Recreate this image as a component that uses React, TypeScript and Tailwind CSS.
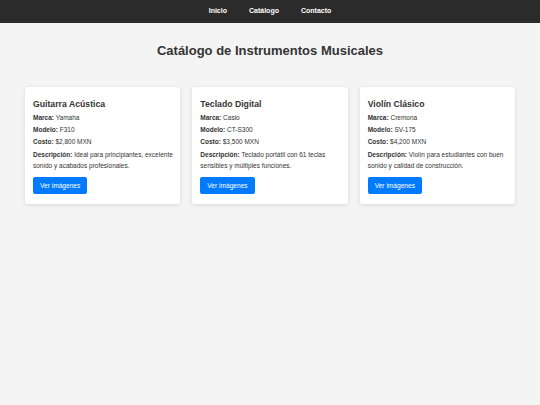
import React from "react";

const instruments = [
  {
    name: "Guitarra Acústica",
    brand: "Yamaha",
    model: "F310",
    cost: "$2,800 MXN",
    desc: "Ideal para principiantes, excelente sonido y acabados profesionales.",
  },
  {
    name: "Teclado Digital",
    brand: "Casio",
    model: "CT-S300",
    cost: "$3,500 MXN",
    desc: "Teclado portátil con 61 teclas sensibles y múltiples funciones.",
  },
  {
    name: "Violín Clásico",
    brand: "Cremona",
    model: "SV-175",
    cost: "$4,200 MXN",
    desc: "Violín para estudiantes con buen sonido y calidad de construcción.",
  },
];

const Card = ({ item }) => (
  <div className="bg-white rounded-[3px] shadow-[0_1px_4px_rgba(0,0,0,0.12)] pl-[8px] pr-[6px] pt-[10px] pb-[9px] text-[#333]">
    <h3 className="text-[8.7px] font-bold leading-[14px] mb-[1px]">{item.name}</h3>
    <p className="text-[6.5px] leading-[12px]">
      <b>Marca:</b> {item.brand}
    </p>
    <p className="text-[6.5px] leading-[12px]">
      <b>Modelo:</b> {item.model}
    </p>
    <p className="text-[6.5px] leading-[12px]">
      <b>Costo:</b> {item.cost}
    </p>
    <p className="text-[6.5px] leading-[11px] mt-[1px]">
      <b>Descripción:</b> {item.desc}
    </p>
    <button className="mt-[6px] bg-[#007bff] text-white text-[6.6px] rounded-[2px] h-[17px] px-[7px]">
      Ver imágenes
    </button>
  </div>
);

export default function App() {
  return (
    <div
      className="min-h-[405px] bg-[#f4f4f4]"
      style={{ fontFamily: '"Liberation Sans", Arial, sans-serif' }}
    >
      <nav className="h-[23px] bg-[#2b2b2b] flex items-center justify-center gap-[22px] text-white text-[7px] font-bold">
        <a>Inicio</a>
        <a>Catálogo</a>
        <a>Contacto</a>
      </nav>
      <h1 className="text-center text-[13px] leading-[16px] font-bold text-[#333] mt-[20px] mb-[28px]">
        Catálogo de Instrumentos Musicales
      </h1>
      <div className="grid grid-cols-3 gap-[12px] px-[25px]">
        {instruments.map((it) => (
          <Card key={it.name} item={it} />
        ))}
      </div>
    </div>
  );
}
